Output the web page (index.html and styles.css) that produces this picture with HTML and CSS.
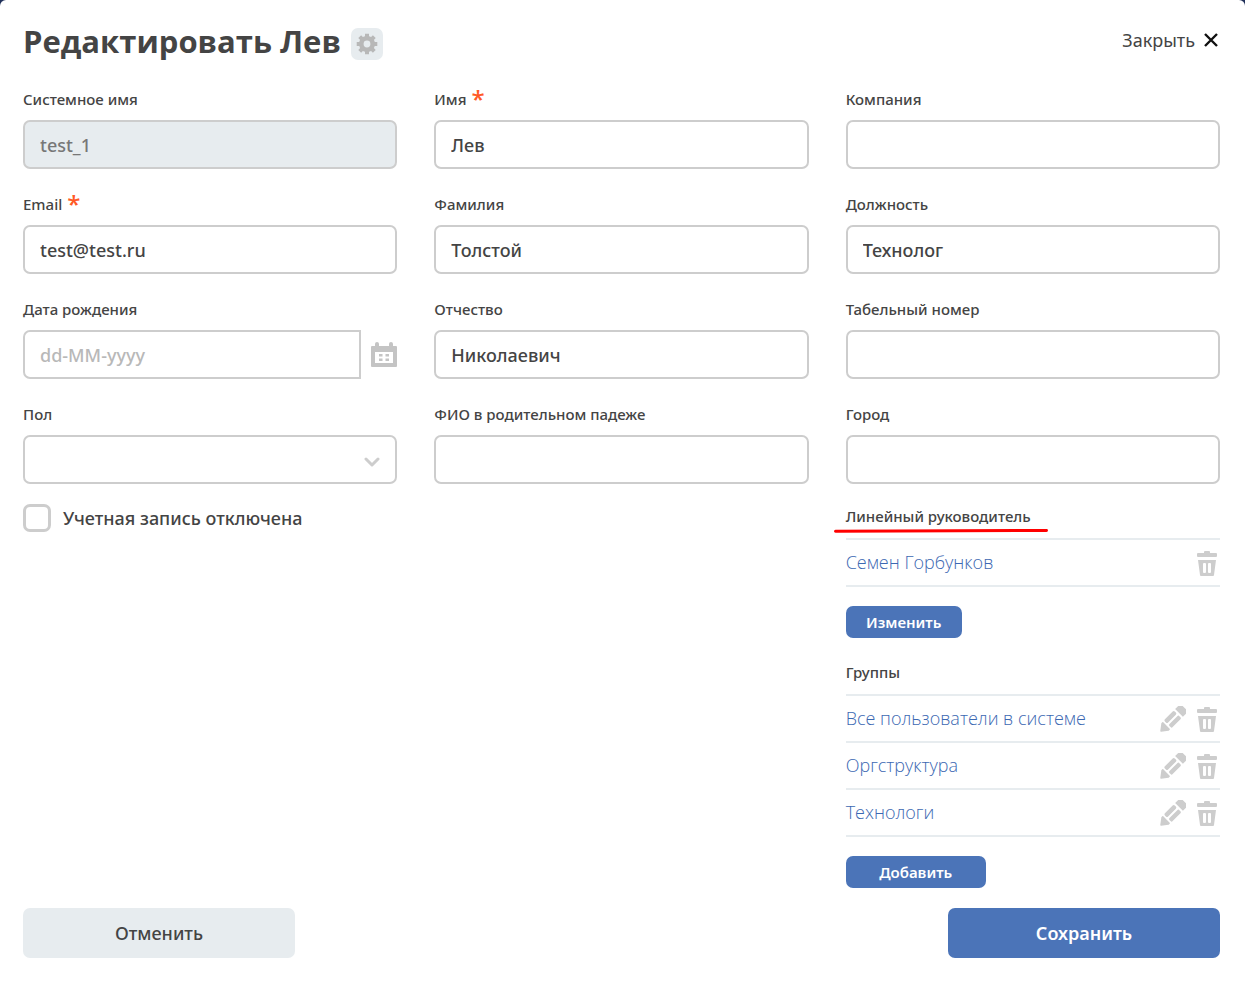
FILE: index.html
```html
<!DOCTYPE html>
<html lang="ru">
<head>
<meta charset="utf-8">
<meta name="viewport" content="width=device-width, initial-scale=1">
<title>Редактировать Лев</title>
<link rel="stylesheet" href="styles.css">
</head>
<body>
<svg class="sprite" aria-hidden="true">
  <symbol id="trash" viewBox="0 -1 22 26">
    <path d="M8 2V1Q8 0 9 0H13Q14 0 14 1V2H20Q21 2 21 3V5Q21 6 20 6H2Q1 6 1 5V3Q1 2 2 2ZM2 9H20L18 24Q18 25 17 25H5Q4 25 4 24ZM7 13V21Q7 22 8 22H9Q10 22 10 21V13Q10 12 9 12H8Q7 12 7 13ZM12 13V21Q12 22 13 22H14Q15 22 15 21V13Q15 12 14 12H13Q12 12 12 13Z" fill-rule="evenodd"/>
  </symbol>
  <symbol id="pencil" viewBox="0 0 26 26">
    <g transform="translate(1 25) rotate(-45)">
      <path d="M0 0 6-4.500H7V4.500H6Z" stroke-width="1.500" stroke-linejoin="round" stroke="currentColor"/>
      <rect x="9.500" y="-5.500" width="14" height="4.500" rx="1.500"/>
      <rect x="9.500" y="1" width="14" height="4.500" rx="1.500"/>
      <path d="M25.500-5.500H30Q33-5.500 33-2.500V2.500Q33 5.500 30 5.500H25.500Z"/>
    </g>
  </symbol>
</svg>
<main class="dialog">
  <header class="header">
    <div class="heading">
      <h1 class="title">Редактировать Лев</h1>
      <button class="settings" type="button" aria-label="Настройки">
        <svg width="22" height="22" viewBox="-11 -11 22 22" fill="none" stroke="currentColor">
          <circle r="5.7" stroke-width="4.6"/>
          <path d="M0-7V-10.300M0 7V10.300M-7 0H-10.300M7 0H10.300M-5-5-7.300-7.300M5-5 7.300-7.300M-5 5-7.300 7.300M5 5 7.300 7.300" stroke-width="4"/>
        </svg>
      </button>
    </div>
    <button class="close" type="button">Закрыть
      <svg width="14" height="14" viewBox="0 0 14 14" fill="none" stroke="#111" stroke-width="2.4"><path d="M1 1 13 13M13 1 1 13"/></svg>
    </button>
  </header>

  <form class="form">
    <div class="columns">
      <div class="column">
        <div class="field"><label class="label" for="login">Системное имя</label><input class="input" id="login" value="test_1" disabled></div>
        <div class="field"><label class="label" for="email">Email <span class="star">*</span></label><input class="input" id="email" value="test@test.ru"></div>
        <div class="field">
          <label class="label" for="birth">Дата рождения</label>
          <div class="date">
            <input class="input date-input" id="birth" placeholder="dd-MM-yyyy">
            <button class="icon" type="button" aria-label="Календарь">
              <svg width="26" height="26" viewBox="0 0 26 26" fill="#c4c4c4"><path fill-rule="evenodd" d="M4 4V2Q4 0 6 0T8 2V4H18V2Q18 0 20 0T22 2V4H25Q26 4 26 5V24Q26 25 25 25H1Q0 25 0 24V5Q0 4 1 4ZM4 10V21H22V10Z"/><path d="M8 12h3.500v2.500H8zM14.500 12H18v2.500h-3.500zM8 16.500h3.500V19H8zM14.500 16.500H18V19h-3.500z"/></svg>
            </button>
          </div>
        </div>
        <div class="field"><label class="label" for="sex">Пол</label>
          <div class="select-box"><select class="input select" id="sex"><option></option><option>Мужской</option><option>Женский</option></select>
            <svg class="chevron" width="16" height="10" viewBox="0 0 16 10" fill="none" stroke="#cdcdcd" stroke-width="3" stroke-linecap="round" stroke-linejoin="round"><path d="M2 2 8 8 14 2"/></svg>
          </div>
        </div>
        <label class="check"><input class="checkbox" type="checkbox">Учетная запись отключена</label>
      </div>

      <div class="column">
        <div class="field"><label class="label" for="name">Имя <span class="star">*</span></label><input class="input" id="name" value="Лев"></div>
        <div class="field"><label class="label" for="surname">Фамилия</label><input class="input" id="surname" value="Толстой"></div>
        <div class="field"><label class="label" for="patronymic">Отчество</label><input class="input" id="patronymic" value="Николаевич"></div>
        <div class="field"><label class="label" for="genitive">ФИО в родительном падеже</label><input class="input" id="genitive"></div>
      </div>

      <div class="column">
        <div class="field"><label class="label" for="company">Компания</label><input class="input" id="company"></div>
        <div class="field"><label class="label" for="position">Должность</label><input class="input" id="position" value="Технолог"></div>
        <div class="field"><label class="label" for="number">Табельный номер</label><input class="input" id="number"></div>
        <div class="field"><label class="label" for="city">Город</label><input class="input" id="city"></div>
        <section class="group">
          <h2 class="label marked">Линейный руководитель
            <svg class="underline" viewBox="0 0 214 4" preserveAspectRatio="none"><path d="M1.500 2.300 212.500 1.500" stroke="#f00" stroke-width="3" stroke-linecap="round"/></svg>
          </h2>
          <ul class="list">
            <li class="item"><a class="link" href="#">Семен Горбунков</a><button class="icon" type="button" aria-label="Удалить"><svg width="22" height="26"><use href="#trash"/></svg></button></li>
          </ul>
          <button class="button small" type="button">Изменить</button>
        </section>
        <section class="group">
          <h2 class="label">Группы</h2>
          <ul class="list">
            <li class="item"><a class="link" href="#">Все пользователи в системе</a><button class="icon" type="button" aria-label="Изменить"><svg width="26" height="26"><use href="#pencil"/></svg></button><button class="icon" type="button" aria-label="Удалить"><svg width="22" height="26"><use href="#trash"/></svg></button></li>
            <li class="item"><a class="link" href="#">Оргструктура</a><button class="icon" type="button" aria-label="Изменить"><svg width="26" height="26"><use href="#pencil"/></svg></button><button class="icon" type="button" aria-label="Удалить"><svg width="22" height="26"><use href="#trash"/></svg></button></li>
            <li class="item"><a class="link" href="#">Технологи</a><button class="icon" type="button" aria-label="Изменить"><svg width="26" height="26"><use href="#pencil"/></svg></button><button class="icon" type="button" aria-label="Удалить"><svg width="22" height="26"><use href="#trash"/></svg></button></li>
          </ul>
          <button class="button small wide" type="button">Добавить</button>
        </section>
      </div>
    </div>
    <footer class="footer">
      <button class="button large secondary" type="button">Отменить</button>
      <button class="button large" type="submit">Сохранить</button>
    </footer>
  </form>
</main>
</body>
</html>
```
FILE: styles.css
```css
*, *::before, *::after { box-sizing: border-box; }
body {
  margin: 0;
  background: #20305a;
  color: #444;
  font: 500 18px/24px "Noto Sans", "Open Sans", sans-serif;
}
button, input, select { font: inherit; color: inherit; }
button { padding: 0; border: 0; background: none; cursor: pointer; }
svg { display: block; }
.sprite { position: absolute; width: 0; height: 0; }
.dialog {
  min-height: 100vh;
  padding: 20px 25px 32px 23px;
  border-radius: 6px 6px 0 0;
  background: #fff;
}
.header { display: flex; justify-content: space-between; align-items: flex-start; }
.heading { display: flex; align-items: center; gap: 10px; }
.title { margin: 0; font-family: "Open Sans", sans-serif; font-size: 31px; line-height: 42px; font-weight: 700; }
.settings {
  display: grid;
  place-items: center;
  width: 32px;
  height: 32px;
  margin-top: 6px;
  border-radius: 7px;
  background: #e7ecef;
  color: #b8b8b8;
}
.close { display: flex; align-items: center; gap: 9px; padding: 8px 2px; font-weight: 400; }
.form { margin-top: 25px; }
.columns { display: grid; grid-template-columns: repeat(3, minmax(0, 1fr)); gap: 37px; }
.field { display: flex; flex-direction: column; gap: 9px; margin-bottom: 23px; }
.field:last-of-type { margin-bottom: 20px; }
.label { display: flex; align-items: center; gap: 5px; height: 24px; margin: 0; font-size: 15px; font-weight: 500; }
.star { color: #ff5a26; font-family: "Open Sans", sans-serif; font-size: 24px; font-weight: 600; line-height: 24px; }
.input {
  width: 100%;
  height: 49px;
  padding: 0 15px;
  border: 2px solid #cdcdcd;
  border-radius: 7px;
  background: #fff;
  outline: 0;
}
.input:disabled { background: #e7ecef; color: #777; }
.input::placeholder { color: #b8b8b8; opacity: 1; }
.date { display: flex; align-items: center; gap: 10px; }
.date-input { flex: 1; min-width: 0; border-radius: 7px 0 0 7px; }
.select-box { position: relative; }
.select { display: block; appearance: none; }
.chevron { position: absolute; right: 17px; top: 22px; pointer-events: none; }
.check { display: flex; align-items: center; gap: 12px; }
.checkbox {
  appearance: none;
  width: 28px;
  height: 28px;
  margin: 0;
  border: 3px solid #cdcdcd;
  border-radius: 7px;
}
.checkbox:checked { background: #4b74b8; }
.group + .group { margin-top: 22px; }
.marked { position: relative; }
.underline { position: absolute; left: -12px; top: 25px; width: 214px; height: 4px; overflow: visible; }
.list { margin: 10px 0 19px; padding: 0; list-style: none; border-top: 2px solid #e7ecef; }
.item { display: flex; align-items: center; gap: 10px; height: 47px; padding-right: 2px; border-bottom: 2px solid #e7ecef; }
.link { flex: 1; padding-bottom: 2px; color: #3c68b2; font-family: "Open Sans", sans-serif; font-weight: 300; text-decoration: none; }
.icon { color: #cdcdcd; fill: currentColor; }
.button { border-radius: 7px; background: #4b74b8; color: #fff; text-align: center; }
.small { display: block; min-width: 116px; height: 32px; padding: 0 20px; font-size: 15px; font-weight: 600; }
.wide { min-width: 140px; }
.footer { display: flex; justify-content: space-between; margin-top: 20px; }
.large { width: 272px; height: 50px; font-weight: 600; }
.secondary { background: #e7ecef; color: #444; font-weight: 500; }
```
